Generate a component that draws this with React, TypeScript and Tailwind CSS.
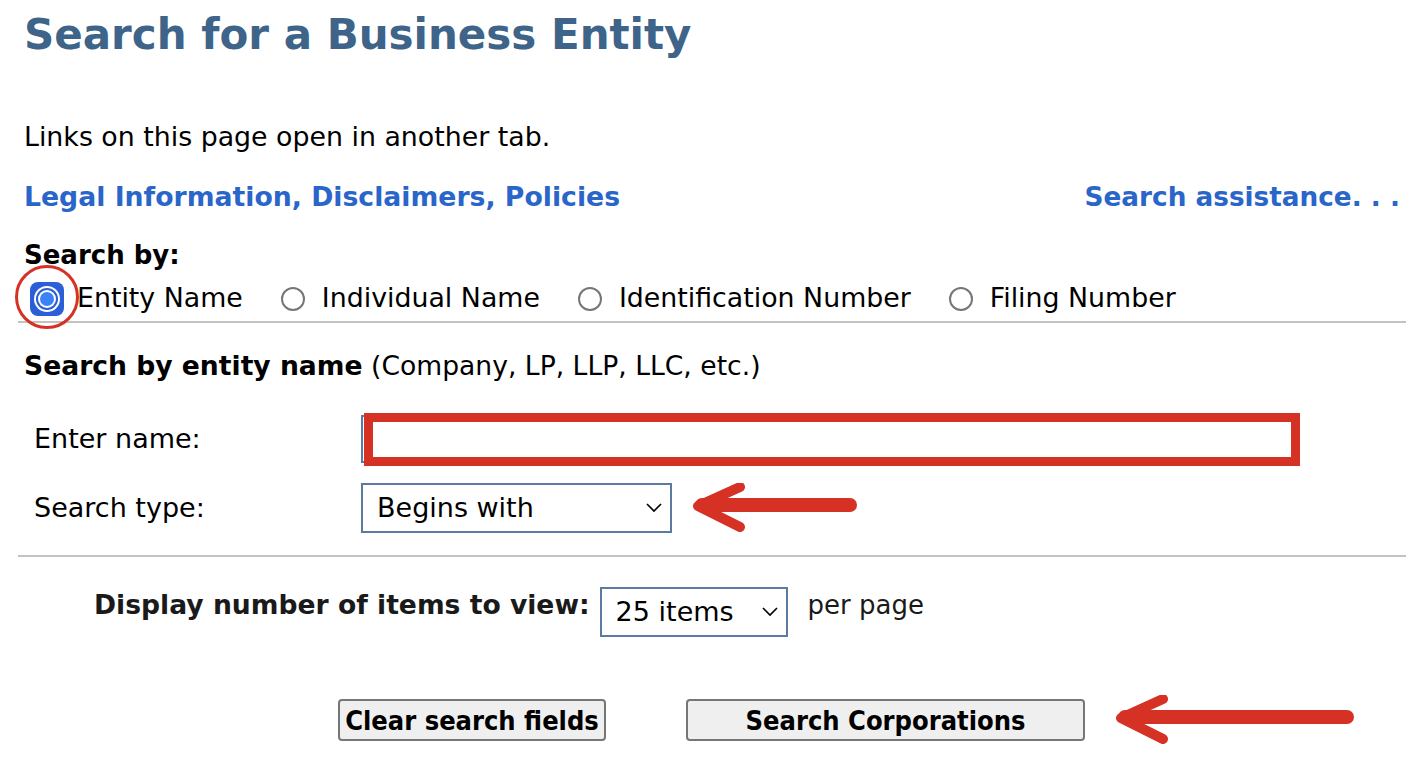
import React, { useState } from 'react';

const verdana = "font-['DejaVu_Sans',sans-serif]";
const narrow = "font-['DejaVu_Sans_Condensed','DejaVu_Sans',sans-serif]";

// Hand-drawn red pointer used as a callout next to fields
const Arrow: React.FC<{ width: number; className?: string }> = ({ width, className }) => (
    <svg width={width} height="50" viewBox={`0 0 ${width} 50`} className={className} fill="none">
        <path
            d={`M${width - 8} 22 L10 22`}
            stroke="#d63125"
            strokeWidth="14"
            strokeLinecap="round"
        />
        <path
            d="M48 4 L6 23 L48 44"
            stroke="#d63125"
            strokeWidth="10"
            strokeLinecap="round"
            strokeLinejoin="round"
        />
    </svg>
);

const Radio: React.FC<{ checked: boolean; label: string; onClick: () => void }> = ({ checked, label, onClick }) => (
    <label className="flex items-center cursor-pointer" onClick={onClick}>
        {checked ? (
            <span className="relative flex items-center justify-center w-[38px] h-[38px] ml-[10px] mr-[11px]">
                <svg width="38" height="38" viewBox="0 0 38 38">
                    <rect x="2" y="2" width="34" height="34" rx="8" fill="#2a5fd8" />
                    <circle cx="19" cy="19" r="13" fill="#fff" />
                    <circle cx="19" cy="19" r="11" fill="#2a5fd8" />
                    <circle cx="19" cy="19" r="9" fill="#fff" />
                    <circle cx="19" cy="19" r="7" fill="#3b82f6" />
                </svg>
                {/* red circle callout */}
                <span className="absolute w-[64px] h-[64px] rounded-full border-[3px] border-[#d63125] left-[-13px] top-[-15px]" />
            </span>
        ) : (
            <span className="w-[24px] h-[24px] rounded-full border-2 border-[#767676] bg-white mr-[17px]" />
        )}
        <span className={`${verdana} text-[26.8px] text-black`}>{label}</span>
    </label>
);

const Chevron = () => (
    <svg width="16" height="10" viewBox="0 0 16 10" fill="none">
        <path d="M1 1 L8 8 L15 1" stroke="#000" strokeWidth="1.6" />
    </svg>
);

const App = () => {
    const [searchBy, setSearchBy] = useState('entity');
    const options = [
        { id: 'entity', label: 'Entity Name' },
        { id: 'individual', label: 'Individual Name' },
        { id: 'id', label: 'Identification Number' },
        { id: 'filing', label: 'Filing Number' },
    ];

    return (
        <div className="w-[1424px] h-[758px] bg-white px-[18px] overflow-hidden">
            <div className="px-[6px]">
                <h1 className={`${verdana} font-bold text-[42px] leading-none text-[#3e6489] pt-[14px]`}>
                    Search for a Business Entity
                </h1>
                <p className={`${verdana} text-[26.8px] leading-none text-black mt-[68px]`}>
                    Links on this page open in another tab.
                </p>
                <div className="flex justify-between items-center mt-[33px]">
                    <a className={`${verdana} font-bold text-[26.7px] leading-none text-[#2a66c9]`} href="#">
                        Legal Information, Disclaimers, Policies
                    </a>
                    <a className={`${verdana} font-bold text-[26.3px] leading-none text-[#2a66c9]`} href="#">
                        Search assistance. . .
                    </a>
                </div>
                <div className={`${verdana} font-bold text-[26px] leading-none text-black mt-[31px]`}>Search by:</div>
                <div className="flex items-center gap-[38px] mt-[12px] -ml-[6px] h-[38px]">
                    {options.map(o => (
                        <Radio key={o.id} checked={searchBy === o.id} label={o.label} onClick={() => setSearchBy(o.id)} />
                    ))}
                </div>
            </div>
            <div className="h-[2px] bg-[#c3c3c3] mt-[3px]" />

            <div className="px-[6px]">
                <p className={`${verdana} text-[26.6px] leading-none text-black mt-[30px]`}>
                    <span className="font-bold">Search by entity name</span> (Company, LP, LLP, LLC, etc.)
                </p>
                <div className="grid grid-cols-[327px_1fr] items-center gap-y-[20px] mt-[36px] pl-[10px]">
                    <label className={`${verdana} text-[27px] text-black`}>Enter name:</label>
                    <div className="relative w-[939px] h-[48px]">
                        <input className="w-full h-full border-2 border-[#5b7ba0] outline-none px-2" />
                        <span className="absolute left-[3px] top-[-2px] w-[936px] h-[53px] border-[9px] border-[#d63125]" />
                    </div>
                    <label className={`${verdana} text-[27px] text-black`}>Search type:</label>
                    <div className="flex items-center">
                        <div className="flex items-center justify-between w-[311px] h-[50px] border-2 border-[#5b7ba0] pl-[14px] pr-[8px]">
                            <span className={`${verdana} text-[27px] text-black`}>Begins with</span>
                            <Chevron />
                        </div>
                        <Arrow width={166} className="ml-[20px]" />
                    </div>
                </div>
            </div>
            <div className="h-[2px] bg-[#c3c3c3] mt-[22px]" />

            <div className="flex items-center mt-[16px] pl-[76px]">
                <span className={`${verdana} font-bold text-[26.6px] text-[#1a1a1a]`}>Display number of items to view:</span>
                <div className="flex items-center justify-between w-[188px] h-[50px] border-2 border-[#5b7ba0] pl-[14px] pr-[8px] ml-[10px] mt-[14px]">
                    <span className={`${verdana} text-[27px] text-black`}>25 items</span>
                    <Chevron />
                </div>
                <span className={`${verdana} text-[26px] text-[#1a1a1a] ml-[20px]`}>per page</span>
            </div>

            <div className="flex items-center mt-[58px] pl-[320px]">
                <button className={`${narrow} font-bold text-[27px] text-black w-[268px] h-[42px] border-2 border-[#767676] rounded-[4px] bg-[#efefef]`}>
                    Clear search fields
                </button>
                <button className={`${narrow} font-bold text-[27px] text-black w-[399px] h-[42px] border-2 border-[#767676] rounded-[4px] bg-[#efefef] ml-[80px]`}>
                    Search Corporations
                </button>
                <Arrow width={240} className="ml-[30px]" />
            </div>
        </div>
    );
};

export default App;
